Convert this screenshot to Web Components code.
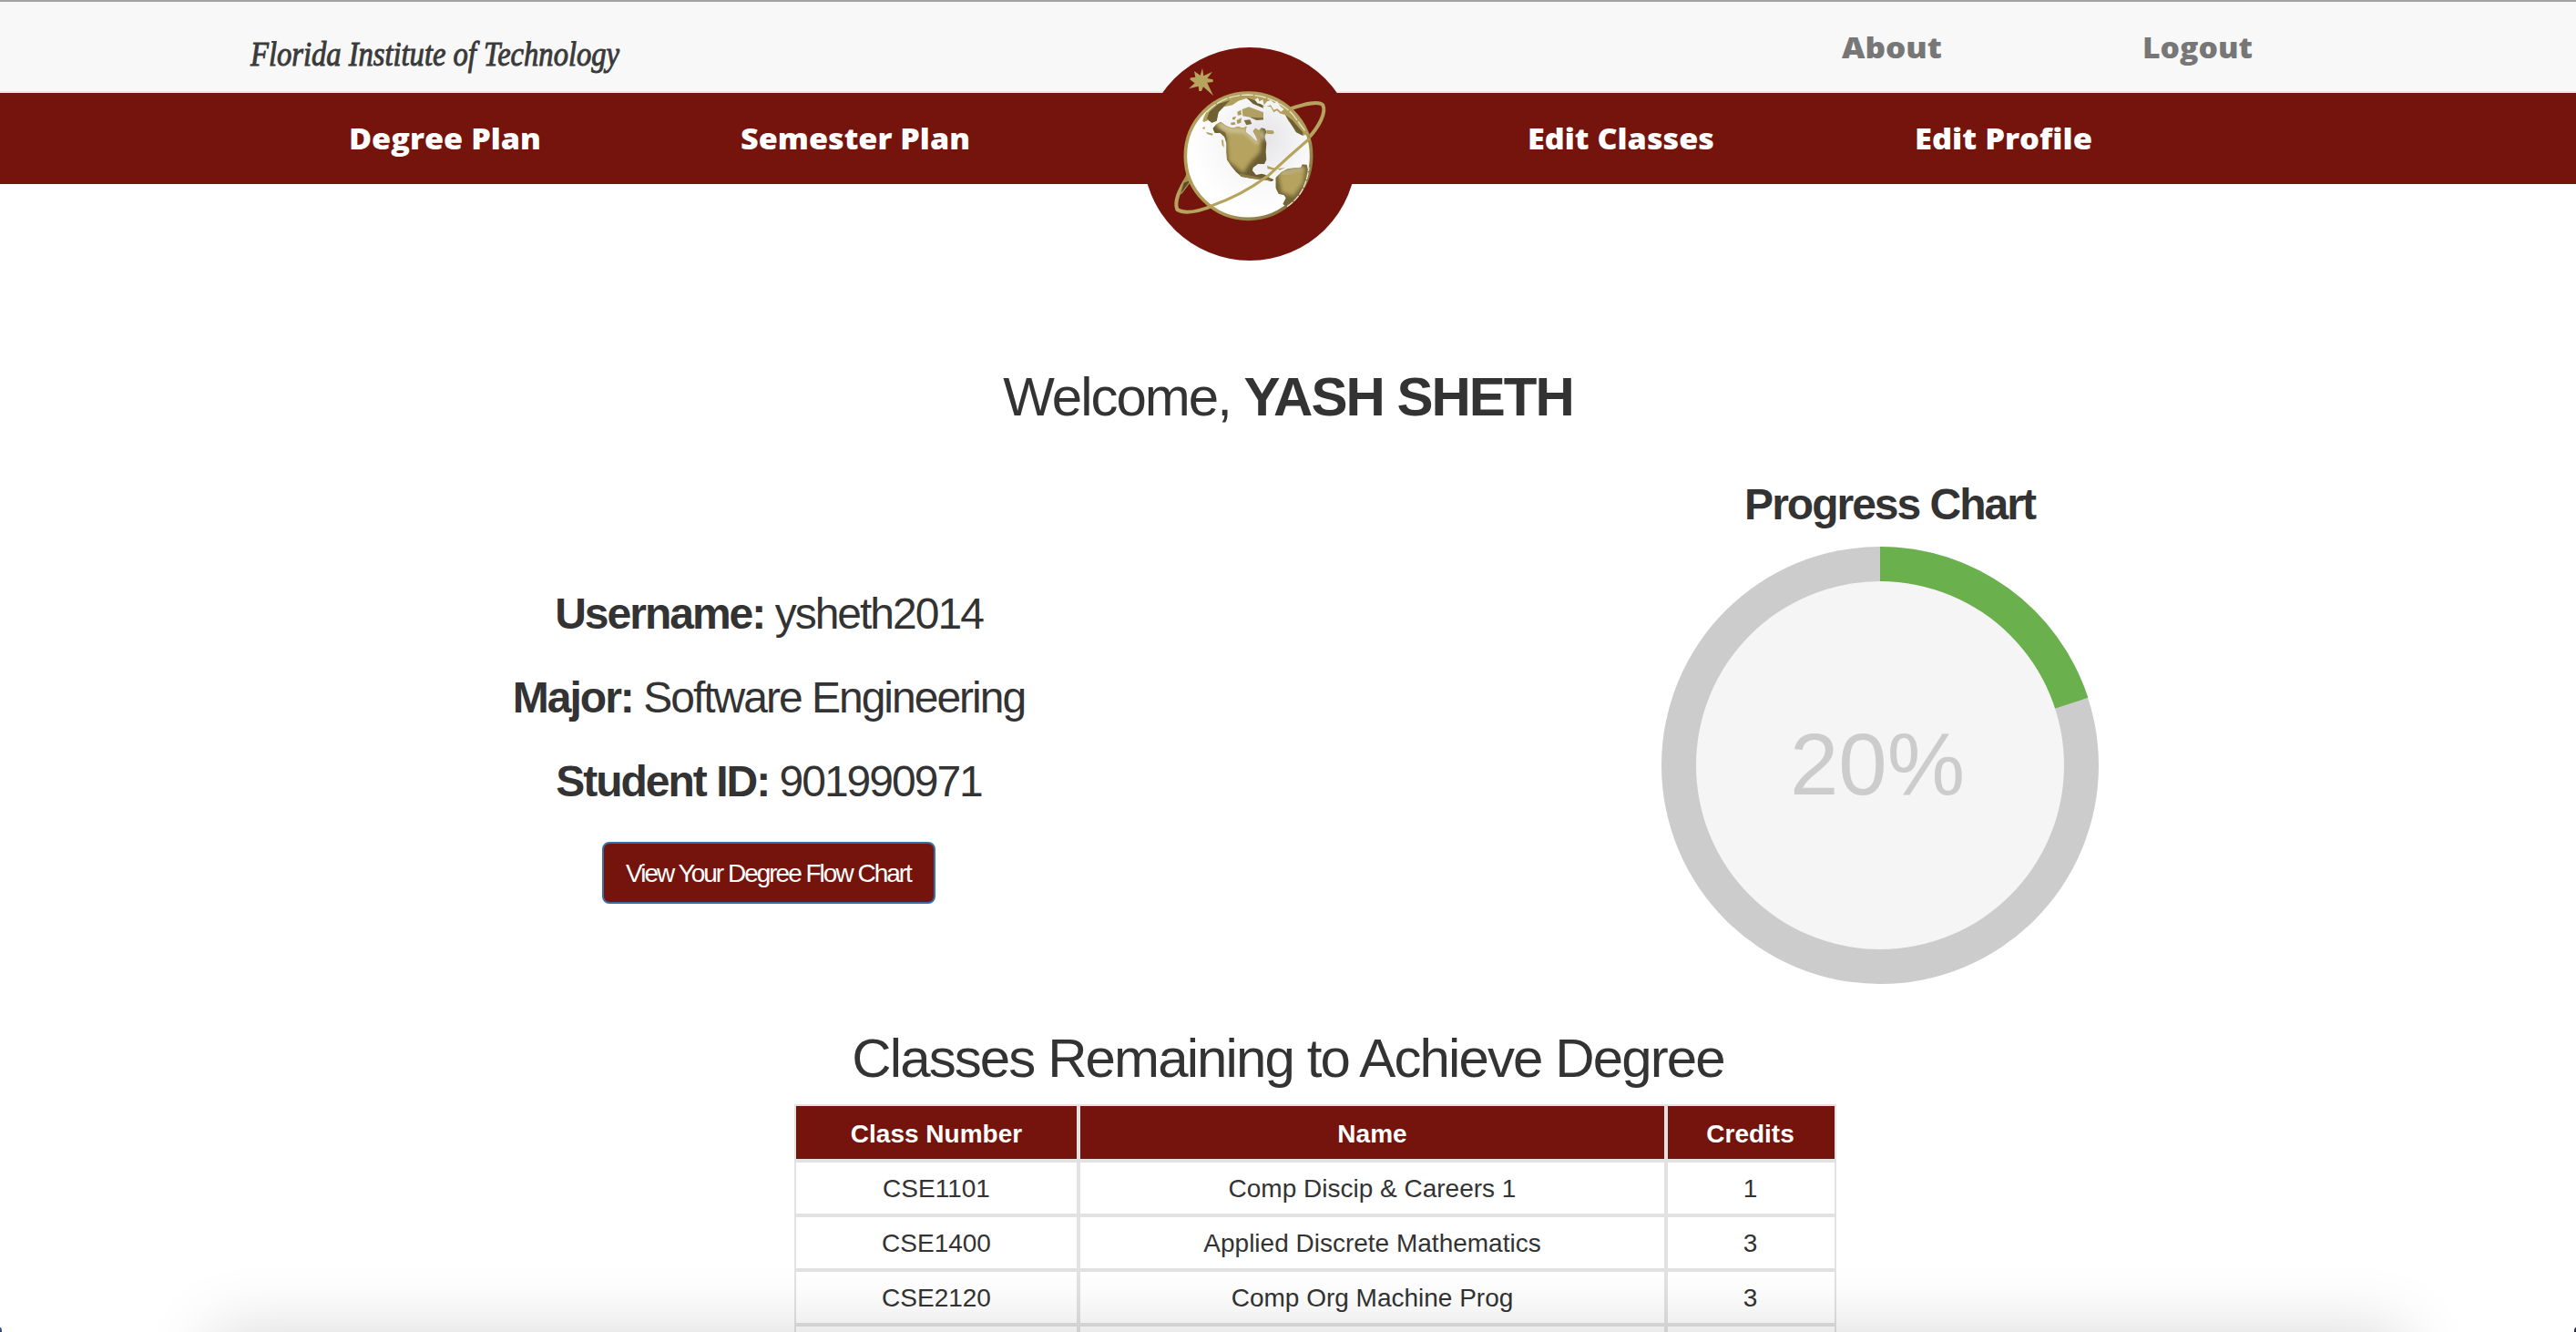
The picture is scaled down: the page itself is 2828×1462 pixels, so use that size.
<!DOCTYPE html>
<html lang="en">
<head>
<meta charset="utf-8">
<title>Degree Planner</title>
<style>
html, body { margin: 0; height: 100%; overflow: hidden; background: #fff; }
body { font-family: "Liberation Sans", Arial, sans-serif; color: #333; }
</style>
</head>
<body>
<student-dashboard></student-dashboard>

<script>
const define = (name, html, setup) => {
  const tpl = document.createElement('template');
  tpl.innerHTML = html;
  customElements.define(name, class extends HTMLElement {
    constructor() {
      super();
      this.attachShadow({ mode: 'open' }).append(tpl.content.cloneNode(true));
    }
    connectedCallback() { if (setup) setup(this, this.shadowRoot); }
  });
};

/* A heavy navigation label set to a fixed measure */
define('nav-link', `
<style>
:host { display: block; height: 100px; font: 800 32px/1 "Open Sans", "Gill Sans", sans-serif; }
svg { display: block; height: 100px; overflow: visible; fill: currentColor; }
</style>
<svg><text y="62" lengthAdjust="spacingAndGlyphs"></text></svg>`,
(el, root) => {
  const w = el.getAttribute('measure');
  root.querySelector('svg').setAttribute('width', w);
  const t = root.querySelector('text');
  t.setAttribute('textLength', w);
  t.setAttribute('x', 0);
  t.textContent = el.getAttribute('label');
});

define('school-wordmark', `
<style>
:host { display: block; font: italic 38px/1 "Liberation Serif", serif; }
svg { display: block; overflow: visible; fill: #3a3a3a; stroke: #3a3a3a; stroke-width: 1; }
</style>
<svg width="406" height="98"><text x="1" y="69.500" textLength="405" lengthAdjust="spacingAndGlyphs">Florida Institute of Technology</text></svg>`);

define('globe-emblem', `
<style>
:host { display: block; width: 234px; height: 234px; }
svg { display: block; }
</style>
<svg width="234" height="234" viewBox="1255 52 234 234">
  <defs>
    <radialGradient id="ball" cx=".62" cy=".36" r=".6"><stop offset="0" stop-color="#e4e4e8"/><stop offset=".6" stop-color="#f8f8f8"/><stop offset="1" stop-color="#fff"/></radialGradient>
    <linearGradient id="rim" x1="0" y1="0" x2="1" y2="1"><stop offset="0" stop-color="#b3a15c"/><stop offset=".6" stop-color="#ac9b58"/><stop offset="1" stop-color="#6d5f31"/></linearGradient>
    <filter id="soft" x="-30%" y="-30%" width="160%" height="160%"><feGaussianBlur stdDeviation="7"/></filter>
    <clipPath id="na"><path d="M139 213 L150 200 L165 191 L184 205 L204 212 L222 207 L240 212 L250 206 L248 226 L262 236 L276 250 L288 257 L281 238 L272 222 L280 212 L291 220 L300 211 L311 214 L316 224 L310 240 L316 262 L314 290 L316 316 L309 330 L288 330 L272 342 L270 352 L282 366 L300 362 L312 365 L324 374 L341 382 L333 388 L318 383 L300 382 L268 378 L234 372 L216 356 L200 337 L186 316 L184 290 L184 262 L178 240 L164 228 L146 228 Z"/></clipPath>
    <clipPath id="sa"><path d="M346 376 L366 356 L386 346 L410 343 L430 341 L434 331 L449 332 L453 350 L444 390 L428 430 L402 458 L384 472 L370 462 L380 442 L374 433 L356 428 L346 408 Z"/></clipPath>
  </defs>
  <circle cx="1372" cy="169" r="117" fill="#75140c"/>
  <g transform="translate(1285 70) scale(.3333)">
    <path d="M60 366 C25 420 12 455 22 480 C48 497 102 483 146 465" fill="none" stroke="#b5a35e" stroke-width="12"/>
    <path d="M53 360 L30 425 L36 430 L68 388 Z" fill="#a29150"/>
    <path d="M66 384 L34 426 L44 392 Z" fill="#5f4a25"/>
    <path d="M395 148 C440 133 488 120 502 136 C514 160 489 207 456 243" fill="none" stroke="#b5a35e" stroke-width="12"/>
    <circle cx="256.500" cy="303.500" r="207.500" fill="url(#ball)" stroke="url(#rim)" stroke-width="11"/>
    <path d="M106 188 C116 150 150 108 256 92 C350 96 420 150 456 232 L436 236 C418 232 404 206 388 188 L378 168 L362 164 L350 154 L340 160 L330 142 L308 140 L290 132 L272 124 L250 114 L224 122 L204 136 L176 142 L158 160 L152 188 L136 194 L124 186 L110 192 Z" fill="#b1a05d"/>
    <path d="M120 180 L128 158 L158 132 L196 120 L176 140 L158 160 L152 188 L136 194 Z M250 112 L276 120 L304 136 L306 146 L272 132 Z M378 168 L402 186 L436 226 L436 236 L414 226 Z" fill="#6e6033"/>
    <path d="M120 158 Q176 102 256 102 Q344 106 402 166 L444 222" fill="none" stroke="#e9e2c5" stroke-width="4" stroke-dasharray="38 5"/>
    <path d="M278 118 L288 112 L292 124 L304 118 L308 136 L318 124 L330 120 L342 130 L352 124 L362 140 L374 150 L364 158 L352 148 L340 152 L330 136 L314 142 L296 132 L286 130 Z" fill="#f3f3f3"/>
    <path d="M236 150 L258 142 L286 152 L306 160 L306 184 L284 186 L262 176 L238 172 Z" fill="#b0a064"/>
    <path d="M262 176 L306 178 L306 184 L284 186 Z M242 186 L262 184 L268 198 L250 202 Z" fill="#7d6f40"/>
    <path d="M220 158 L232 152 L234 168 L222 170 Z M204 176 L216 174 L212 184 L204 184 Z M218 186 L234 178 L232 194 L220 198 Z M198 194 L212 192 L214 200 L200 202 Z" fill="#ab9b5e"/>
    <g clip-path="url(#na)">
      <rect x="130" y="180" width="220" height="220" fill="#6b5d31"/>
      <path d="M130 180 L300 200 L296 290 L262 326 L240 360 L190 320 L184 240 Z" fill="#b5a35f" filter="url(#soft)"/>
      <path d="M150 212 L180 226 L188 262 L180 246 L160 230 Z" fill="#75673a"/>
      <path d="M160 200 L196 218 L246 222 L290 262 M300 222 L306 250" fill="none" stroke="#d6cba6" stroke-width="11" filter="url(#soft)"/>
      <path d="M228 366 L290 378 L330 384" fill="none" stroke="#8b7c45" stroke-width="9"/>
    </g>
    <g clip-path="url(#sa)">
      <rect x="340" y="320" width="120" height="160" fill="#736536"/>
      <path d="M362 366 L436 350 L430 392 L402 428 L372 418 Z" fill="#b5a35f" stroke="#b5a35f" stroke-width="14" filter="url(#soft)"/>
      <path d="M362 360 L436 342" stroke="#d6cba6" stroke-width="9" filter="url(#soft)"/>
    </g>
    <path d="M316 218 L338 220 L342 228 L334 232 L316 230 Z M318 336 L344 344 L342 350 L320 346 Z M352 346 L378 342 L360 350 Z M104 212 L114 206 L112 216 Z M116 224 L140 230 L138 236 L122 232 Z M168 250 l6 2 l2 24 l-6 -8z" fill="#b0a062"/>
    <path d="M384 470 Q446 430 456 340" fill="none" stroke="#eae4cc" stroke-width="4" stroke-dasharray="24 4"/>
    <path d="M134 468 Q230 436 320 370 Q386 308 458 246" fill="none" stroke="#b5a35e" stroke-width="9"/>
    <path d="M105 14 L109 40 L138 26 L121 48 L140 52 L140 60 L121 62 L141 105 L108 76 L102 90 L94 90 L92 74 L60 82 L80 64 L64 52 L66 46 L82 44 L78 24 L98 38 Z" fill="#b5a35e"/>
  </g>
</svg>`);

define('site-header', `
<style>
:host { display: block; }
.top, .nav { display: flex; align-items: flex-start; height: 98px; }
.top { border-top: 2px solid #a2a2a2; border-bottom: 2px solid #e7e7e7; background: #f8f8f8; padding-left: 274px; }
.top nav-link { color: #777; height: 98px; }
.about { margin-left: 1342px; }
.logout { margin-left: 220px; }
.nav { position: relative; height: 100px; background: #75140c; color: #fff; padding-left: 383px; }
.sem { margin-left: 219px; }
.cls { margin-left: 612px; }
.prof { margin-left: 220px; }
globe-emblem { position: absolute; left: 1255px; top: -50px; }
</style>
<div class="top">
  <school-wordmark></school-wordmark>
  <nav-link class="about" label="About" measure="110"></nav-link>
  <nav-link class="logout" label="Logout" measure="121"></nav-link>
</div>
<div class="nav">
  <nav-link label="Degree Plan" measure="211"></nav-link>
  <nav-link class="sem" label="Semester Plan" measure="252"></nav-link>
  <nav-link class="cls" label="Edit Classes" measure="205"></nav-link>
  <nav-link class="prof" label="Edit Profile" measure="195"></nav-link>
  <globe-emblem></globe-emblem>
</div>`);

define('profile-field', `
<style>
:host { display: block; font-size: 48px; line-height: 52px; letter-spacing: -2px; margin: 0 2px 40px 0; white-space: nowrap; }
</style>
<b><slot name="label"></slot></b> <slot></slot>`);

define('action-button', `
<style>
:host { display: block; }
button { box-sizing: border-box; display: block; width: 366px; height: 68px; padding: 2px 1px 0 0; border: 2px solid #3b6ea5; border-radius: 8px; background: #75140c; color: #fff; font: 28px/40px "Liberation Sans", Arial, sans-serif; letter-spacing: -2px; white-space: nowrap; }
</style>
<button type="button"><slot></slot></button>`);

define('progress-ring', `
<style>
:host { display: block; width: 480px; height: 480px; }
svg { display: block; }
text { font-size: 96px; fill: #ccc; }
</style>
<svg width="480" height="480" viewBox="-240 -240 480 480">
  <circle r="240" fill="#ccc"/>
  <path class="done" fill="#6ab04c"/>
  <circle r="202" fill="#f5f5f5"/>
  <text text-anchor="middle" x="-3" y="32"></text>
</svg>`,
(el, root) => {
  const v = +el.getAttribute('value');
  const a = v / 100 * 2 * Math.PI;
  root.querySelector('.done').setAttribute('d',
    `M0 0V-240A240 240 0 ${v > 50 ? 1 : 0} 1 ${240 * Math.sin(a)} ${-240 * Math.cos(a)}Z`);
  root.querySelector('text').textContent = v + '%';
});

define('class-table', `
<style>
:host { display: block; }
.grid { display: grid; grid-template-columns: 308px 641px 183px; column-gap: 4px; row-gap: 4px; width: 1140px; padding: 2px; background: #e2e2e2; font-size: 28px; line-height: 40px; text-align: center; }
.grid div { height: 47px; padding-top: 9px; background: #fff; white-space: nowrap; }
.grid .h { height: 47px; padding-top: 11px; background: #75140c; color: #fff; font-weight: bold; }
.grid div:nth-child(3n) { padding-right: 2px; }
</style>
<div class="grid"></div>`,
(el, root) => {
  const grid = root.querySelector('.grid');
  const add = (text, cls) => {
    const d = document.createElement('div');
    d.textContent = text;
    if (cls) d.className = cls;
    grid.append(d);
  };
  ['Class Number', 'Name', 'Credits'].forEach(t => add(t, 'h'));
  [['CSE1101', 'Comp Discip & Careers 1', '1'],
   ['CSE1400', 'Applied Discrete Mathematics', '3'],
   ['CSE2120', 'Comp Org Machine Prog', '3'],
   ['', '', '']].forEach(r => r.forEach(t => add(t)));
});

define('window-shade', `
<style>
:host { position: absolute; left: 0; top: 0; width: 2828px; height: 1462px; overflow: hidden; pointer-events: none; }
.shade { position: absolute; left: 232px; right: 188px; top: 1462px; height: 300px; box-shadow: 0 0 70px rgba(0,0,0,.155); }
.corner { position: absolute; left: 0; bottom: 0; width: 2px; height: 5px; background: #2b4a7d; border-top-right-radius: 2px 5px; }
.right { left: auto; right: 0; background: #1c2a44; border-radius: 2px 0 0 0 / 5px 0 0 0; }
</style>
<div class="shade"></div><div class="corner"></div><div class="corner right"></div>`);

define('student-dashboard', `
<style>
:host { display: block; position: relative; width: 2828px; height: 1462px; overflow: hidden; }
h1 { margin: 0; font-size: 60px; font-weight: normal; line-height: 66px; letter-spacing: -2px; text-align: center; }
.welcome { margin-top: 201px; }
.remaining { letter-spacing: -1.9px; }
.cols { display: grid; grid-template-columns: 1414px 1048px; padding-left: 138px; height: 601px; margin-top: 59px; }
.info { display: flex; flex-direction: column; align-items: center; padding-top: 120px; }
.info action-button { margin: 0 2px 0 0; }
.chart { display: flex; flex-direction: column; align-items: center; }
h2 { margin: 0 3px 20px 0; font-size: 48px; line-height: 52px; letter-spacing: -2px; }
progress-ring { margin-right: 24px; }
class-table { margin: 17px 0 0 872px; }
</style>
<site-header></site-header>
<h1 class="welcome">Welcome, <b>YASH SHETH</b></h1>
<section class="cols">
  <div class="info">
    <profile-field><span slot="label">Username:</span>ysheth2014</profile-field>
    <profile-field><span slot="label">Major:</span>Software Engineering</profile-field>
    <profile-field><span slot="label">Student ID:</span>901990971</profile-field>
    <action-button>View Your Degree Flow Chart</action-button>
  </div>
  <div class="chart">
    <h2>Progress Chart</h2>
    <progress-ring value="20"></progress-ring>
  </div>
</section>
<h1 class="remaining">Classes Remaining to Achieve Degree</h1>
<class-table></class-table>
<window-shade></window-shade>`);
</script>
</body>
</html>
